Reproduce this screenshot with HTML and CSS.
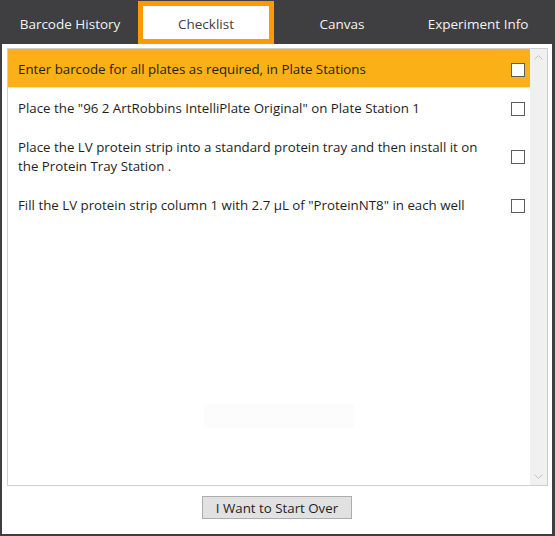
FILE: index.html
```html
<!DOCTYPE html>
<html>
<head>
<meta charset="utf-8">
<link rel="stylesheet" href="styles.css">
</head>
<body>
<div class="window">
  <div class="tabs">
    <div class="tab">Barcode History</div>
    <div class="tab active">Checklist</div>
    <div class="tab">Canvas</div>
    <div class="tab">Experiment Info</div>
  </div>
  <div class="main">
    <div class="list">
      <div class="items">
        <div class="row selected">
          <div class="text">Enter barcode for all plates as required, in Plate Stations</div>
          <div class="check"></div>
        </div>
        <div class="row">
          <div class="text">Place the "96 2 ArtRobbins IntelliPlate Original" on Plate Station 1</div>
          <div class="check"></div>
        </div>
        <div class="row">
          <div class="text">Place the LV protein strip into a standard protein tray and then install it on the Protein Tray Station .</div>
          <div class="check"></div>
        </div>
        <div class="row">
          <div class="text">Fill the LV protein strip column 1 with 2.7 µL of "ProteinNT8" in each well</div>
          <div class="check"></div>
        </div>
        <div class="ghost"></div>
      </div>
      <div class="scrollbar">
        <svg class="arrow" width="17" height="17" viewBox="0 0 17 17"><path d="M4.5 10.5 L8.5 6.5 L12.5 10.5" fill="none" stroke="#c2c2c2" stroke-width="1"/></svg>
        <svg class="arrow" width="17" height="17" viewBox="0 0 17 17"><path d="M4.5 6.5 L8.5 10.5 L12.5 6.5" fill="none" stroke="#c2c2c2" stroke-width="1"/></svg>
      </div>
    </div>
    <div class="actions">
      <button class="btn">I Want to Start Over</button>
    </div>
  </div>
</div>
</body>
</html>
```

FILE: styles.css
```css
html, body {
  margin: 0;
  padding: 0;
  background: #3f3f41;
}
.window {
  width: 555px;
  height: 536px;
  display: flex;
  flex-direction: column;
  font-family: "Open Sans", "Noto Sans", sans-serif;
  font-size: 13.3px;
  color: #1e1e1e;
}
.tabs {
  height: 44px;
  display: flex;
  padding-left: 2px;
}
.tab {
  width: 136px;
  height: 44px;
  box-sizing: border-box;
  display: flex;
  align-items: center;
  justify-content: center;
  color: #f2f2f2;
  font-size: 13.5px;
  padding-top: 4px;
}
.tab.active {
  background: #ffffff;
  border: 5px solid #ff9900;
  margin-top: 1px;
  height: 43px;
  color: #404040;
  padding-top: 3px;
}
.main {
  flex: 1;
  background: #ffffff;
  margin: 0 3px 2px 2px;
  padding: 4px 4px 0 5px;
  display: flex;
  flex-direction: column;
}
.list {
  height: 436px;
  border: 1px solid #cfcfcf;
  display: flex;
}
.items {
  flex: 1;
  position: relative;
}
.row {
  display: flex;
  align-items: center;
  padding: 11px 5px 9px 10px;
  line-height: 19px;
}
.row.selected {
  background: #fbb017;
  box-shadow: inset 0 -1px 0 #fde4a6;
}
.text {
  flex: 1;
  margin-right: 20px;
}
.check {
  width: 12px;
  height: 12px;
  border: 1px solid #5c5c5c;
  background: #ffffff;
  flex: none;
}
.ghost {
  position: absolute;
  left: 196px;
  top: 355px;
  width: 150px;
  height: 24px;
  background: #fcfcfc;
}
.scrollbar {
  width: 17px;
  background: #f0f0f0;
  display: flex;
  flex-direction: column;
  justify-content: space-between;
}
.arrow {
  display: block;
}
.actions {
  display: flex;
  justify-content: center;
  padding-top: 10px;
}
.btn {
  width: 150px;
  height: 23px;
  margin-left: -1px;
  background: #e1e1e1;
  border: 1px solid #adadad;
  font-family: "Open Sans", "Noto Sans", sans-serif;
  font-size: 13.3px;
  color: #1e1e1e;
  padding: 0;
  line-height: 20px;
}
```
